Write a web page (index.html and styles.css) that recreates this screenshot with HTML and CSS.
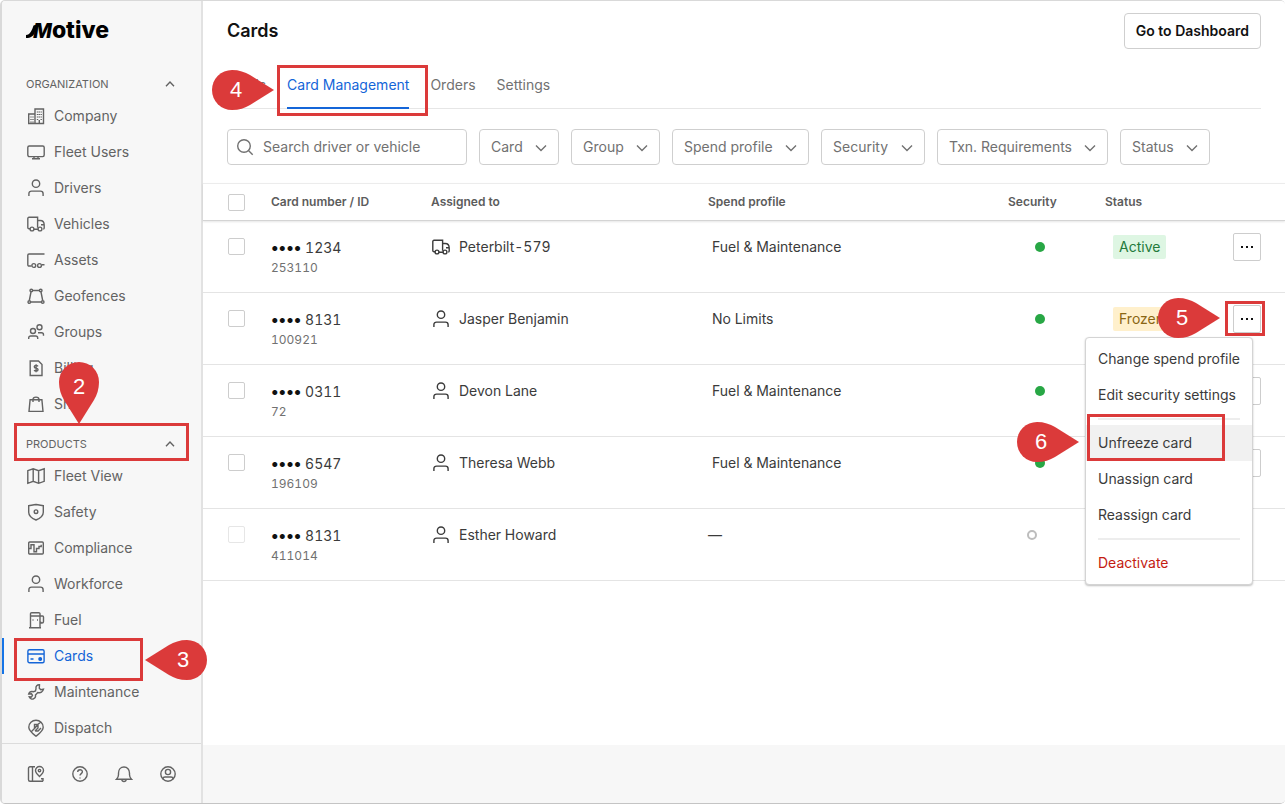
FILE: index.html
```html
<!DOCTYPE html>
<html lang="en">
<head>
    <meta charset="UTF-8">
    <meta name="viewport" content="width=device-width, initial-scale=1.0">
    <title>Cards</title>
    <link rel="stylesheet" href="styles.css">
</head>
<body>
    <!-- icon set -->
    <svg class="icon-defs" aria-hidden="true">
        <symbol id="i-up" viewBox="0 0 12 12"><path d="M2 8.2L6 4l4 4.2"/></symbol>
        <symbol id="i-down" viewBox="0 0 12 12"><path d="M1 3.5L6 8.5l5-5"/></symbol>
        <symbol id="i-swash" viewBox="0 0 12 14"><path d="M0 14v-3C4 11 6 6 7.500 1.500L12 0 9 8C7.500 12 5 14 0 14z" fill="currentColor" stroke="none"/></symbol>
        <symbol id="i-company" viewBox="0 0 18 18"><path d="M8 16.5V2h8.5v14.5zM8 7H1.7v9.5H8M4 9.5v1M6 9.5v1M4 12v1M6 12v1M4 14.5v1M6 14.5v1M10.5 4.5v1M12.3 4.5v1M14.2 4.5v1M10.5 7v1M12.3 7v1M14.2 7v1M10.5 9.5v1M12.3 9.5v1M14.2 9.5v1M10.5 12v1M14.2 12v1M12.3 13v3.5"/></symbol>
        <symbol id="i-monitor" viewBox="0 0 18 18"><rect x="0.8" y="3" width="16.4" height="10.6" rx="1.5"/><path d="M7 13.6v2M11 13.6v2M5 15.8h8"/></symbol>
        <symbol id="i-user" viewBox="0 0 18 18"><circle cx="9" cy="4.700" r="3.700"/><path d="M1.900 17v-2.300A2.600 2.600 0 0 1 4.500 12.100h9a2.600 2.600 0 0 1 2.600 2.600v2.300"/></symbol>
        <symbol id="i-truck" viewBox="0 0 18 18"><path d="M3 13.700H2a1.200 1.200 0 0 1-1.200-1.200v-9A1.200 1.200 0 0 1 2 2.300h8.600v10.500M7 14.200h4M10.600 5.500h2.600c2.600 0 4 2 4 4.500v3a1 1 0 0 1-1 1M14 9.800h3"/><circle cx="5" cy="14" r="1.900"/><circle cx="13" cy="14" r="1.900"/></symbol>
        <symbol id="i-trailer" viewBox="0 0 18 18"><path d="M17.500 3H2A1.200 1.200 0 0 0 .8 4.200v9.600A1.200 1.200 0 0 0 2 15h2.500M15 13.800h2.500"/><circle cx="6.800" cy="14.500" r="1.900"/><circle cx="12.500" cy="14.500" r="1.900"/></symbol>
        <symbol id="i-geofence" viewBox="0 0 18 18"><path d="M5.800 3.500h6.400M4 5L2.300 13.500M14 5l1.700 8.500M4 15h10"/><circle cx="4.300" cy="3.500" r="1.300"/><circle cx="13.700" cy="3.500" r="1.300"/><circle cx="2.300" cy="15" r="1.300"/><circle cx="15.700" cy="15" r="1.300"/></symbol>
        <symbol id="i-groups" viewBox="0 0 18 18"><circle cx="6" cy="8" r="2.500"/><circle cx="12.500" cy="4.300" r="2.500"/><path d="M1.700 16v-1a2 2 0 0 1 2-2h5a2 2 0 0 1 2 2v1M11 9.700h3.500a2 2 0 0 1 2 2v1"/></symbol>
        <symbol id="i-bill" viewBox="0 0 18 18"><path d="M3.200 2h8.300L15 5.500V16.500H3.200z"/><path d="M11 7.300c-.5-.7-1-.9-1.900-.9-2.500 0-2.500 2.600 0 2.800 2.600.2 2.600 3 0 3-.9 0-1.500-.3-2-1M9.100 5.300v8"/></symbol>
        <symbol id="i-bag" viewBox="0 0 18 18"><path d="M3.100 4.700h11.800l1.100 11.700H2zM6 7V4.500C6 1.300 12 1.300 12 4.500V7"/></symbol>
        <symbol id="i-map" viewBox="0 0 18 18"><path d="M.8 3.700l5.400-1.900 5.400 1.900 5.600-1.900v12.500l-5.600 2-5.400-2-5.400 2zM6.200 1.800v12.500M11.600 3.700v12.600"/></symbol>
        <symbol id="i-shield" viewBox="0 0 18 18"><path d="M9 1.500c2.500.5 5 .8 7.300 1.200v6.500c0 3.500-3 6-7.300 7.800C4.700 15.200 1.700 12.700 1.700 9.200V2.700C4 2.300 6.500 2 9 1.500z"/><circle cx="9" cy="8.700" r="1.800"/></symbol>
        <symbol id="i-compliance" viewBox="0 0 18 18"><rect x="1.700" y="3" width="14.600" height="12" rx="1"/><path d="M2 9.500h2V5.700h3v7h2.500V9.500h2.500v-2h2.200V5.700"/></symbol>
        <symbol id="i-fuel" viewBox="0 0 18 18"><path d="M3.500 16.500V3A1.200 1.200 0 0 1 4.700 1.700h7A1.200 1.200 0 0 1 13 3v13.500M2 16.700h12M3.500 5h9.500M13 5h2.500a1 1 0 0 1 1 1v4.500a1.500 1.500 0 0 1-3 0M5.500 9h1M10 9h1"/></symbol>
        <symbol id="i-card" viewBox="0 0 18 18"><rect x="0.900" y="2.700" width="16.200" height="13" rx="1.500"/><path d="M1 7h16M3.500 12h3"/><circle cx="13.200" cy="12" r="1.300" fill="currentColor"/></symbol>
        <symbol id="i-wrench" viewBox="0 0 18 18"><path d="M12.500 1.800c-2.300-.2-4 1.600-3.500 3.900L8.500 8 6.500 8.700C4.300 8.200 2.300 9 1.700 11l2.800-.2 1 1.500-1 1.600-2.300-.2c.8 2 2.900 3 4.600 2 1.500-.8 2-2.200 1.700-3.700l2.300-2.500c2.800.8 5-.5 5.700-3.300l-2.700.6-1.500-1.600z"/></symbol>
        <symbol id="i-dispatch" viewBox="0 0 18 18"><path d="M9 17.200C5 14 1.800 11.700 1.800 8.200a7.200 6.900 0 0 1 14.400 0c0 3.500-3.200 5.800-7.200 9zM4 13L7.500 9.500V5.500h3L14 3M7.500 9.500L11 5.500M8 12l3-3V5.500M8 12h3l3-3"/></symbol>
        <symbol id="i-guide" viewBox="0 0 18 18"><path d="M8 1.700H3A1.500 1.500 0 0 0 1.500 3.200v11.600A1.500 1.500 0 0 0 3 16.300h13M5.500 1.700v14.600M16 16.300v-2.500h-2M12.500 11.500C10.500 9.500 8.500 7.700 8.500 5.500a4 4 0 0 1 8 0c0 2.200-2 4-4 6z"/><circle cx="12.500" cy="5.600" r="1.200"/></symbol>
        <symbol id="i-help" viewBox="0 0 18 18"><circle cx="9" cy="9" r="7.200"/><path d="M6.700 7c0-3 4.700-3 4.700-.2C11.400 8.600 9 8.700 9 10.600M9 12.500v1"/></symbol>
        <symbol id="i-bell" viewBox="0 0 18 18"><path d="M1.500 14.300h15c-1.500-1.500-2-2.300-2-4.500V8c0-3.500-2.200-6-5.500-6S3.500 4.500 3.500 8v1.800c0 2.200-.5 3-2 4.500zM6.800 14.500c.3 2.700 4.100 2.700 4.400 0"/></symbol>
        <symbol id="i-account" viewBox="0 0 18 18"><circle cx="9" cy="9" r="7.200"/><circle cx="9" cy="7" r="2.600"/><path d="M4 14.300v-.5a2 2 0 0 1 2-1.800h6a2 2 0 0 1 2 1.800v.5"/></symbol>
        <symbol id="i-search" viewBox="0 0 18 18"><circle cx="8" cy="8" r="6.300"/><path d="M12.700 12.700l4 4"/></symbol>
        <symbol id="i-dots" viewBox="0 0 14 4"><path d="M1 1h2v2H1zM6 1h2v2H6zM11 1h2v2h-2z" fill="currentColor" stroke="none"/></symbol>
        <symbol id="i-pin" viewBox="0 0 62 40"><path d="M20 0C27 0 33 2 38 5L62 20 38 35C33 38 27 40 20 40A20 20 0 0 1 20 0Z" fill="currentColor" stroke="none"/></symbol>
        <symbol id="i-pin-left" viewBox="0 0 62 40"><path d="M42 0C35 0 29 2 24 5L0 20l24 15c5 3 11 5 18 5A20 20 0 0 0 42 0Z" fill="currentColor" stroke="none"/></symbol>
        <symbol id="i-pin-down" viewBox="0 0 40 62"><path d="M0 20C0 27 2 33 5 38L20 62 35 38C38 33 40 27 40 20A20 20 0 0 0 0 20Z" fill="currentColor" stroke="none"/></symbol>
    </svg>

    <div class="app">
        <aside class="sidebar">
            <a class="logo" href="#"><svg class="swash"><use href="#i-swash"/></svg><span class="logo-m">M</span><span>otive</span></a>

            <nav class="nav">
                <button class="nav-heading" type="button">ORGANIZATION <svg class="chevron"><use href="#i-up"/></svg></button>
                <a class="nav-item" href="#"><svg class="icon"><use href="#i-company"/></svg>Company</a>
                <a class="nav-item" href="#"><svg class="icon"><use href="#i-monitor"/></svg>Fleet Users</a>
                <a class="nav-item" href="#"><svg class="icon"><use href="#i-user"/></svg>Drivers</a>
                <a class="nav-item" href="#"><svg class="icon"><use href="#i-truck"/></svg>Vehicles</a>
                <a class="nav-item" href="#"><svg class="icon"><use href="#i-trailer"/></svg>Assets</a>
                <a class="nav-item" href="#"><svg class="icon"><use href="#i-geofence"/></svg>Geofences</a>
                <a class="nav-item" href="#"><svg class="icon"><use href="#i-groups"/></svg>Groups</a>
                <a class="nav-item" href="#"><svg class="icon"><use href="#i-bill"/></svg>Billing</a>
                <a class="nav-item" href="#"><svg class="icon"><use href="#i-bag"/></svg>Shop</a>

                <button class="nav-heading products" type="button">PRODUCTS <svg class="chevron"><use href="#i-up"/></svg></button>
                <a class="nav-item" href="#"><svg class="icon"><use href="#i-map"/></svg>Fleet View</a>
                <a class="nav-item" href="#"><svg class="icon"><use href="#i-shield"/></svg>Safety</a>
                <a class="nav-item" href="#"><svg class="icon"><use href="#i-compliance"/></svg>Compliance</a>
                <a class="nav-item" href="#"><svg class="icon"><use href="#i-user"/></svg>Workforce</a>
                <a class="nav-item" href="#"><svg class="icon"><use href="#i-fuel"/></svg>Fuel</a>
                <a class="nav-item active" href="#"><svg class="icon"><use href="#i-card"/></svg>Cards</a>
                <a class="nav-item" href="#"><svg class="icon"><use href="#i-wrench"/></svg>Maintenance</a>
                <a class="nav-item" href="#"><svg class="icon"><use href="#i-dispatch"/></svg>Dispatch</a>
            </nav>

            <div class="sidebar-footer">
                <button type="button" aria-label="Guide"><svg class="icon"><use href="#i-guide"/></svg></button>
                <button type="button" aria-label="Help"><svg class="icon"><use href="#i-help"/></svg></button>
                <button type="button" aria-label="Notifications"><svg class="icon"><use href="#i-bell"/></svg></button>
                <button type="button" aria-label="Account"><svg class="icon"><use href="#i-account"/></svg></button>
            </div>
        </aside>

        <main class="main">
            <div class="content">
                <header class="header">
                    <h1>Cards</h1>
                    <button class="dashboard" type="button">Go to Dashboard</button>
                </header>

                <nav class="tabs">
                    <a href="#">Cards</a>
                    <a class="active" href="#">Card Management</a>
                    <a href="#">Orders</a>
                    <a href="#">Settings</a>
                </nav>

                <div class="filters">
                    <label class="search">
                        <svg class="icon"><use href="#i-search"/></svg>
                        <input type="text" placeholder="Search driver or vehicle" aria-label="Search driver or vehicle">
                    </label>
                    <div class="filter"><select aria-label="Card"><option>Card</option></select><svg class="arrow"><use href="#i-down"/></svg></div>
                    <div class="filter"><select aria-label="Group"><option>Group</option></select><svg class="arrow"><use href="#i-down"/></svg></div>
                    <div class="filter"><select aria-label="Spend profile"><option>Spend profile</option></select><svg class="arrow"><use href="#i-down"/></svg></div>
                    <div class="filter"><select aria-label="Security"><option>Security</option></select><svg class="arrow"><use href="#i-down"/></svg></div>
                    <div class="filter"><select aria-label="Txn. Requirements"><option>Txn. Requirements</option></select><svg class="arrow"><use href="#i-down"/></svg></div>
                    <div class="filter"><select aria-label="Status"><option>Status</option></select><svg class="arrow"><use href="#i-down"/></svg></div>
                </div>

                <table class="cards">
                    <thead>
                        <tr>
                            <th class="col-check"><input type="checkbox" aria-label="Select all"></th>
                            <th class="col-number">Card number / ID</th>
                            <th class="col-assigned">Assigned to</th>
                            <th>Spend profile</th>
                            <th class="col-security">Security</th>
                            <th class="col-status">Status</th>
                            <th class="col-actions"></th>
                        </tr>
                    </thead>
                    <tbody>
                        <tr>
                            <td class="col-check"><input type="checkbox" aria-label="Select 1234"></td>
                            <td><div class="number"><b>••••</b> 1234</div><div class="id">253110</div></td>
                            <td><div class="assigned"><svg class="icon"><use href="#i-truck"/></svg>Peterbilt-579</div></td>
                            <td class="profile">Fuel &amp; Maintenance</td>
                            <td><div class="dot"></div></td>
                            <td><span class="badge badge-active">Active</span></td>
                            <td><button class="more" type="button" aria-label="More"><svg class="dots"><use href="#i-dots"/></svg></button></td>
                        </tr>
                        <tr>
                            <td class="col-check"><input type="checkbox" aria-label="Select 8131"></td>
                            <td><div class="number"><b>••••</b> 8131</div><div class="id">100921</div></td>
                            <td><div class="assigned"><svg class="icon"><use href="#i-user"/></svg>Jasper Benjamin</div></td>
                            <td class="profile">No Limits</td>
                            <td><div class="dot"></div></td>
                            <td><span class="badge badge-frozen">Frozen</span></td>
                            <td>
                                <div class="actions">
                                    <button class="more" type="button" aria-label="More"><svg class="dots"><use href="#i-dots"/></svg></button>
                                    <div class="menu">
                                        <button type="button">Change spend profile</button>
                                        <button type="button">Edit security settings</button>
                                        <hr>
                                        <button class="hover" type="button">Unfreeze card</button>
                                        <button type="button">Unassign card</button>
                                        <button type="button">Reassign card</button>
                                        <hr>
                                        <button class="danger" type="button">Deactivate</button>
                                    </div>
                                </div>
                            </td>
                        </tr>
                        <tr>
                            <td class="col-check"><input type="checkbox" aria-label="Select 0311"></td>
                            <td><div class="number"><b>••••</b> 0311</div><div class="id">72</div></td>
                            <td><div class="assigned"><svg class="icon"><use href="#i-user"/></svg>Devon Lane</div></td>
                            <td class="profile">Fuel &amp; Maintenance</td>
                            <td><div class="dot"></div></td>
                            <td></td>
                            <td><button class="more" type="button" aria-label="More"><svg class="dots"><use href="#i-dots"/></svg></button></td>
                        </tr>
                        <tr>
                            <td class="col-check"><input type="checkbox" aria-label="Select 6547"></td>
                            <td><div class="number"><b>••••</b> 6547</div><div class="id">196109</div></td>
                            <td><div class="assigned"><svg class="icon"><use href="#i-user"/></svg>Theresa Webb</div></td>
                            <td class="profile">Fuel &amp; Maintenance</td>
                            <td><div class="dot"></div></td>
                            <td></td>
                            <td><button class="more" type="button" aria-label="More"><svg class="dots"><use href="#i-dots"/></svg></button></td>
                        </tr>
                        <tr>
                            <td class="col-check"><input type="checkbox" aria-label="Select 411014" disabled></td>
                            <td><div class="number"><b>••••</b> 8131</div><div class="id">411014</div></td>
                            <td><div class="assigned"><svg class="icon"><use href="#i-user"/></svg>Esther Howard</div></td>
                            <td>—</td>
                            <td><div class="dot dot-empty"></div></td>
                            <td></td>
                            <td></td>
                        </tr>
                    </tbody>
                </table>
            </div>
        </main>

        <!-- step callouts -->
        <div class="box box-products"></div>
        <div class="box box-cards"></div>
        <div class="box box-tab"></div>
        <div class="box box-more"></div>
        <div class="box box-unfreeze"></div>
        <div class="pin pin-down pin-2"><svg><use href="#i-pin-down"/></svg><span>2</span></div>
        <div class="pin pin-left pin-3"><svg><use href="#i-pin-left"/></svg><span>3</span></div>
        <div class="pin pin-4"><svg><use href="#i-pin"/></svg><span>4</span></div>
        <div class="pin pin-5"><svg><use href="#i-pin"/></svg><span>5</span></div>
        <div class="pin pin-6"><svg><use href="#i-pin"/></svg><span>6</span></div>
    </div>
</body>
</html>
```
FILE: styles.css
```css
* {
    box-sizing: border-box;
}

body {
    margin: 0;
    background-color: #fff;
    color: #3b3b3b;
    font-family: Inter, "Liberation Sans", sans-serif;
    font-size: 14px;
    line-height: 20px;
}

button,
input,
select {
    font: inherit;
    color: inherit;
    margin: 0;
}

button {
    cursor: pointer;
}

a {
    color: inherit;
    text-decoration: none;
}

svg {
    display: block;
    flex: none;
    fill: none;
    stroke: currentColor;
    stroke-width: 1.4;
}

.icon-defs {
    position: absolute;
    width: 0;
    height: 0;
}

.icon {
    width: 18px;
    height: 18px;
}

.app {
    position: relative;
    display: flex;
    height: 100vh;
    border: 1px solid #d9d9d9;
    border-left-width: 2px;
    border-right: none;
    border-bottom-color: #c4c4c4;
    border-radius: 5px;
    overflow: hidden;
}

/* sidebar */
.sidebar {
    display: flex;
    flex-direction: column;
    flex: none;
    width: 201px;
    background-color: #f7f7f7;
    border-right: 2px solid #e2e2e2;
    color: #636363;
}

.logo {
    display: flex;
    align-items: baseline;
    height: 69px;
    padding: 15px 0 0 24px;
    color: #000;
    font-size: 23px;
    font-weight: 800;
    line-height: 28px;
}

.swash {
    width: 12px;
    height: 14px;
    margin-right: -5px;
}

.logo-m {
    font-size: 20px;
    font-style: italic;
}

.nav {
    flex: 1;
    min-height: 0;
    overflow: hidden;
}

.nav-heading {
    display: flex;
    align-items: center;
    justify-content: space-between;
    width: 100%;
    height: 28px;
    padding: 0 25px 0 24px;
    border: none;
    background: none;
    font-size: 11px;
}

.nav-heading.products {
    margin-top: 8px;
}

.chevron {
    width: 12px;
    height: 12px;
}

.nav-item {
    display: flex;
    align-items: center;
    gap: 9px;
    height: 36px;
    padding-left: 25px;
}

.nav-item.active {
    color: #1465d8;
    box-shadow: inset 2px 0 #1473e6;
}

.sidebar-footer {
    display: flex;
    align-items: center;
    gap: 26px;
    height: 60px;
    padding-left: 25px;
    border-top: 1px solid #dcdcdc;
}

.sidebar-footer button {
    padding: 0;
    border: none;
    background: none;
}

/* main */
.main {
    flex: 1;
    min-width: 0;
    padding-bottom: 58px;
    background-color: #f7f7f7;
}

.content {
    height: 100%;
    background-color: #fff;
}

.header {
    display: flex;
    align-items: center;
    justify-content: space-between;
    padding: 12px 24px 0;
}

.header h1 {
    margin: 0;
    color: #111;
    font-size: 18px;
    font-weight: 600;
}

.dashboard {
    height: 36px;
    padding: 0 11px;
    border: 1px solid #cfcfcf;
    border-radius: 4px;
    background-color: #fff;
    color: #111;
    font-weight: 600;
}

.tabs {
    display: flex;
    gap: 21px;
    margin: 18px 24px 0;
    border-bottom: 1px solid #e6e6e6;
    color: #717171;
}

.tabs a {
    height: 41px;
    padding-top: 8px;
}

.tabs .active {
    margin-bottom: -1px;
    height: 42px;
    border-bottom: 2px solid #1465d8;
    color: #1465d8;
}

.filters {
    display: flex;
    gap: 12px;
    padding: 20px 24px 18px;
    color: #717171;
}

.search {
    display: flex;
    align-items: center;
    gap: 9px;
    width: 240px;
    height: 36px;
    padding: 0 8px;
    border: 1px solid #cfcfcf;
    border-radius: 4px;
}

.search input {
    flex: 1;
    min-width: 0;
    padding: 0;
    border: none;
    outline: none;
}

.search input::placeholder {
    color: #717171;
    opacity: 1;
}

.filter {
    position: relative;
}

.filter select {
    appearance: none;
    height: 36px;
    padding: 0 35px 0 11px;
    border: 1px solid #cfcfcf;
    border-radius: 4px;
    background-color: #fff;
}

.arrow {
    position: absolute;
    top: 13px;
    right: 12px;
    width: 12px;
    height: 12px;
    pointer-events: none;
}

/* table */
.cards {
    width: 100%;
    table-layout: fixed;
    border-spacing: 0;
}

.cards th {
    height: 38px;
    padding: 0;
    border-top: 1px solid #ececec;
    border-bottom: 1px solid #d4d4d4;
    color: #5c5c5c;
    font-size: 12px;
    font-weight: 600;
    line-height: 16px;
    text-align: left;
}

.cards thead {
    box-shadow: 0 1px 2px rgba(0, 0, 0, 0.1);
}

.cards td {
    height: 72px;
    padding: 16px 0 0;
    border-bottom: 1px solid #e4e4e4;
    vertical-align: top;
    font-variant-numeric: tabular-nums;
}

.cards .col-check {
    width: 68px;
    padding-left: 25px;
}

.cards .col-number {
    width: 160px;
}

.cards .col-assigned {
    width: 277px;
}

.cards .col-security {
    width: 97px;
}

.cards .col-status {
    width: 128px;
}

.cards .col-actions {
    width: 52px;
}

.cards input {
    display: block;
    appearance: none;
    width: 17px;
    height: 17px;
    border: 1px solid #cdcdcd;
    border-radius: 2px;
    background-color: #fff;
}

.cards td input {
    margin-top: 1px;
}

.cards input:disabled {
    border-color: #e6e6e6;
}

.number b {
    color: #111;
    font-size: 16px;
}

.id {
    color: #717171;
    font-size: 12px;
}

.assigned {
    display: flex;
    align-items: center;
    gap: 9px;
    padding-left: 1px;
}

.cards .profile {
    padding-left: 4px;
}

.dot {
    width: 10px;
    height: 10px;
    margin: 5px 0 0 27px;
    border-radius: 50%;
    background-color: #28a745;
}

.dot-empty {
    margin-left: 19px;
    border: 2px solid #bdbdbd;
    background-color: #fff;
}

.badge {
    display: inline-block;
    height: 24px;
    margin: -2px 0 0 8px;
    padding: 2px 6px;
    border-radius: 2px;
}

.badge-active {
    background-color: #def6e3;
    color: #237a3b;
}

.badge-frozen {
    background-color: #fff0cc;
    color: #8a6714;
}

.more {
    display: flex;
    align-items: center;
    justify-content: center;
    width: 28px;
    height: 28px;
    margin-top: -4px;
    padding: 0;
    border: 1px solid #cdcdcd;
    border-radius: 2px;
    background-color: #fff;
    color: #111;
}

.dots {
    width: 14px;
    height: 4px;
}

.actions {
    position: relative;
    width: 28px;
}

.menu {
    position: absolute;
    top: 32px;
    right: 8px;
    z-index: 1;
    width: 168px;
    padding: 3px 0;
    border: 1px solid #d4d4d4;
    border-radius: 4px;
    background-color: #fff;
    box-shadow: 0 1px 2px rgba(0, 0, 0, 0.25);
}

.menu button {
    display: block;
    width: 100%;
    height: 36px;
    padding: 0 0 0 12px;
    border: none;
    background: none;
    text-align: left;
    white-space: nowrap;
}

.menu .hover {
    background-color: #f1f1f1;
}

.menu .danger {
    color: #c41c12;
}

.menu hr {
    height: 2px;
    margin: 5px 12px;
    border: none;
    background-color: #ededed;
}

/* callouts */
.box {
    position: absolute;
    z-index: 2;
    border: 3px solid #db3a3a;
    pointer-events: none;
}

.box-products {
    left: 12px;
    top: 422px;
    width: 175px;
    height: 38px;
}

.box-cards {
    left: 12px;
    top: 637px;
    width: 129px;
    height: 43px;
}

.box-tab {
    left: 275px;
    top: 64px;
    width: 151px;
    height: 51px;
}

.box-more {
    right: 20px;
    top: 300px;
    width: 40px;
    height: 35px;
}

.box-unfreeze {
    right: 60px;
    top: 413px;
    width: 138px;
    height: 47px;
}

.pin {
    position: absolute;
    z-index: 3;
    width: 62px;
    height: 40px;
    color: #db3a3a;
    pointer-events: none;
}

.pin svg {
    width: 100%;
    height: 100%;
}

.pin span {
    position: absolute;
    top: 0;
    left: 0;
    width: 48px;
    color: #fff;
    font-family: "Liberation Sans", sans-serif;
    font-size: 22px;
    line-height: 40px;
    text-align: center;
}

.pin-down {
    width: 40px;
    height: 62px;
}

.pin-down span {
    width: 40px;
    line-height: 50px;
}

.pin-left span {
    left: 14px;
}

.pin-2 {
    left: 57px;
    top: 361px;
}

.pin-3 {
    left: 143px;
    top: 639px;
}

.pin-4 {
    left: 210px;
    top: 69px;
}

.pin-5 {
    right: 65px;
    top: 297px;
}

.pin-6 {
    right: 206px;
    top: 421px;
}
```
